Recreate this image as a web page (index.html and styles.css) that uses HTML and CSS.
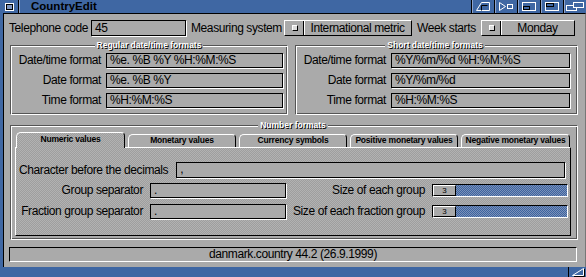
FILE: index.html
```html
<!DOCTYPE html>
<html>
	<head>
		<meta http-equiv="Content-Type" content="text/html; charset=UTF-8">
		<title>CountryEdit</title>
		<link rel="stylesheet" href="styles.css">
	</head>
	<body>
		<div class="win">
			<div class="titlebar">
				<div class="gad close">
					<svg width="18" height="13" viewBox="0 0 18 13"><rect x="5.5" y="3.5" width="8" height="7" fill="none" stroke="#fff"/><rect x="6.5" y="4.5" width="6" height="5" fill="#7d94bf" stroke="#000"/></svg>
				</div>
				<div class="title">CountryEdit</div>
				<div class="gad">
					<svg width="22" height="13" viewBox="0 0 22 13"><path d="M4.5 10.5 L9.5 2.5 H17.5 V10.5 Z" fill="none" stroke="#fff"/><path d="M9.5 10.5 V5.5 H15.5" fill="none" stroke="#000"/></svg>
				</div>
				<div class="gad">
					<svg width="22" height="13" viewBox="0 0 22 13"><path d="M4.5 2.5 L10.5 6.5 L4.5 10.5 Z" fill="none" stroke="#fff"/><rect x="12.5" y="4.5" width="5" height="4" fill="none" stroke="#fff"/></svg>
				</div>
				<div class="gad">
					<svg width="22" height="13" viewBox="0 0 22 13"><rect x="4.5" y="2.5" width="13" height="8" fill="none" stroke="#fff"/><rect x="5.5" y="6.5" width="6" height="3" fill="none" stroke="#000"/></svg>
				</div>
				<div class="gad">
					<svg width="22" height="13" viewBox="0 0 22 13"><rect x="4.5" y="2.5" width="13" height="8" fill="none" stroke="#fff"/><rect x="5.5" y="3.5" width="7" height="3" fill="none" stroke="#000"/></svg>
				</div>
				<div class="gad">
					<svg width="22" height="13" viewBox="0 0 22 13"><rect x="2.5" y="5.5" width="10" height="5" fill="none" stroke="#fff"/><rect x="9.5" y="2.5" width="10" height="5" fill="#3f67a3" stroke="#fff"/></svg>
				</div>
			</div>

			<div class="main">
				<div class="content">
					<div class="toprow">
						<span class="lbl">Telephone code</span>
						<div class="field">45</div>
						<span class="lbl pad">Measuring system</span>
						<div class="cycle"><span class="cyc-ico"></span><span class="cyc-txt">International metric</span></div>
						<span class="lbl pad">Week starts</span>
						<div class="cycle"><span class="cyc-ico"></span><span class="cyc-txt">Monday</span></div>
					</div>

					<div class="groups">
						<fieldset class="grp grp-left">
							<legend>Regular date/time formats</legend>
							<div class="form">
								<span class="lbl r">Date/time format</span><div class="field">%e. %B %Y %H:%M:%S</div>
								<span class="lbl r">Date format</span><div class="field">%e. %B %Y</div>
								<span class="lbl r">Time format</span><div class="field">%H:%M:%S</div>
							</div>
						</fieldset>
						<fieldset class="grp grp-right">
							<legend>Short date/time formats</legend>
							<div class="form">
								<span class="lbl r">Date/time format</span><div class="field">%Y/%m/%d %H:%M:%S</div>
								<span class="lbl r">Date format</span><div class="field">%Y/%m/%d</div>
								<span class="lbl r">Time format</span><div class="field">%H:%M:%S</div>
							</div>
						</fieldset>
					</div>

					<fieldset class="grp grp-number">
						<legend>Number formats</legend>
						<div class="tabs">
							<div class="tab active">Numeric values</div>
							<div class="tab">Monetary values</div>
							<div class="tab">Currency symbols</div>
							<div class="tab">Positive monetary values</div>
							<div class="tab last">Negative monetary values</div>
						</div>
						<div class="page">
							<div class="decrow">
								<span class="lbl">Character before the decimals</span>
								<div class="field wide">,</div>
							</div>
							<div class="numgrid">
								<span class="lbl r">Group separator</span>
								<div class="field">.</div>
								<span class="lbl r">Size of each group</span>
								<div class="slider"><span class="knob">3</span></div>

								<span class="lbl r">Fraction group separator</span>
								<div class="field">.</div>
								<span class="lbl r">Size of each fraction group</span>
								<div class="slider"><span class="knob">3</span></div>
							</div>
						</div>
					</fieldset>

					<div class="status">danmark.country 44.2 (26.9.1999)</div>
				</div>
			</div>

			<div class="bottombar">
				<div class="sizer">
					<svg width="17" height="10" viewBox="0 0 17 10"><path d="M3.5 8.5 L14.5 1.5 V8.5 Z" fill="none" stroke="#fff"/><path d="M5 9.5 H15.5 V2" fill="none" stroke="#000"/></svg>
				</div>
			</div>
		</div>
	</body>
</html>
```

FILE: styles.css
```css
body {
	margin : 0;
	background-color : #ffffff;
	font-family : "Liberation Sans", Arial, sans-serif;
	font-size : 12px;
	letter-spacing : -0.4px;
	color : #000000;
}
.win {
	width : 586px;
	height : 277px;
	background-color : #3f67a3;
	display : flex;
	flex-direction : column;
}

/* title bar */
.titlebar {
	height : 13px;
	display : flex;
}
.gad {
	width : 22px;
	border-left : 1px solid #000000;
	box-shadow : inset 1px 0 0 #8ea4cc;
}
.gad svg {
	display : block;
}
.gad.close {
	width : 18px;
	border-left : none;
	border-right : 1px solid #000000;
	box-shadow : none;
}
.title {
	flex : 1;
	padding-left : 11px;
	font-size : 11.5px;
	font-weight : bold;
	line-height : 13px;
	letter-spacing : 0;
	border-left : 1px solid #8ea4cc;
}

/* window body */
.main {
	flex : 1;
	display : flex;
	padding : 0 0 0 3px;
}
.content {
	flex : 1;
	background-color : #aaaaaa;
	border-left : 1px solid #000000;
	border-top : 1px solid #000000;
	border-right : 1px solid #777777;
	padding : 6px 0 0 5px;
}
.lbl {
	white-space : nowrap;
	line-height : 15px;
}
.lbl.r {
	text-align : right;
}
.lbl.pad {
	padding-left : 5px;
}
.field {
	height : 15px;
	background-color : #aaaaaa;
	border : 1px solid #000000;
	box-shadow : 1px 1px 0 #ffffff;
	box-sizing : border-box;
	padding-left : 3px;
	line-height : 13px;
	white-space : nowrap;
	overflow : hidden;
}

/* first row */
.toprow {
	display : grid;
	grid-template-columns : 82px 95px 98px 128px 69px 94px;
	align-items : center;
	height : 16px;
}
.toprow .field {
	height : 16px;
	line-height : 14px;
}
.cycle {
	height : 16px;
	box-sizing : border-box;
	border : 1px solid;
	border-color : #ffffff #000000 #000000 #ffffff;
	display : flex;
	align-items : center;
}
.cyc-ico {
	width : 4px;
	height : 4px;
	margin-left : 7px;
	background-color : #dddddd;
	border : 1px solid;
	border-color : #ffffff #000000 #000000 #ffffff;
}
.cyc-txt {
	flex : 1;
	text-align : center;
	border-left : 1px solid #000000;
	box-shadow : inset 1px 0 0 #ffffff;
	margin-left : 5px;
	line-height : 14px;
	white-space : nowrap;
}

/* groups */
.grp {
	margin : 0;
	min-width : 0;
	border : 1px solid;
	border-color : #555555 #ffffff #ffffff #555555;
	box-shadow : inset 1px 1px 0 #ffffff, inset -1px -1px 0 #555555;
}
.grp legend {
	margin : 0 auto;
	padding : 0 2px;
	font-size : 8.5px;
	font-weight : bold;
	letter-spacing : 0;
	line-height : 9px;
	color : #ffffff;
	text-shadow : 1px 1px 0 #000000;
	background-color : #aaaaaa;
}
.groups {
	display : flex;
	gap : 7px;
	margin : 5px 0 0 1px;
}
.grp-left {
	width : 278px;
	box-sizing : border-box;
	padding : 3px 4px 6px 4px;
}
.grp-right {
	width : 283px;
	box-sizing : border-box;
	padding : 3px 7px 6px 4px;
}
.form {
	display : grid;
	grid-template-columns : 1fr 177px;
	column-gap : 5px;
	row-gap : 5px;
}
.grp-right .form {
	grid-template-columns : 1fr 179px;
}

/* number formats */
.grp-number {
	width : 568px;
	box-sizing : border-box;
	margin : 6px 0 0 1px;
	padding : 2px 6px 3px 4px;
}
.tabs {
	display : flex;
	align-items : flex-end;
	gap : 3px;
	height : 15px;
	padding-left : 1px;
}
.tab {
	width : 108px;
	height : 13px;
	box-sizing : border-box;
	border : 1px solid;
	border-bottom : none;
	border-color : #ffffff #000000 #ffffff #ffffff;
	border-radius : 5px 4px 0 0;
	font-size : 8.5px;
	font-weight : bold;
	letter-spacing : -0.2px;
	line-height : 11px;
	text-align : center;
	white-space : nowrap;
}
.tab.active, .tab.last {
	width : 109px;
}
.tab.active {
	height : 16px;
	margin-bottom : -1px;
	position : relative;
	line-height : 13px;
	background : repeating-conic-gradient(#9e9e9e 0 25%, #b2b2b2 0 50%) 0 0 / 2px 2px;
}
.page {
	height : 89px;
	box-sizing : border-box;
	border : 1px solid;
	border-color : #ffffff #000000 #000000 #ffffff;
	background : repeating-conic-gradient(#9e9e9e 0 25%, #b2b2b2 0 50%) 0 0 / 2px 2px;
	padding : 14px 5px 0 3px;
}
.decrow {
	display : flex;
	align-items : center;
}
.decrow .field {
	flex : 1;
	height : 16px;
	margin-left : 8px;
}
.numgrid {
	display : grid;
	grid-template-columns : 124px 136px 1fr 136px;
	grid-template-rows : 15px 15px;
	column-gap : 7px;
	row-gap : 6px;
	align-items : center;
	margin-top : 5px;
}
.slider {
	height : 13px;
	box-sizing : border-box;
	border : 1px solid;
	border-color : #000000 #ffffff #ffffff #000000;
	background : repeating-conic-gradient(#3c63a0 0 25%, #7d92b8 0 50%) 0 0 / 2px 2px;
	display : flex;
}
.knob {
	width : 23px;
	box-sizing : border-box;
	border : 1px solid;
	border-color : #ffffff #000000 #000000 #ffffff;
	background-color : #aaaaaa;
	font-size : 8px;
	letter-spacing : 0;
	line-height : 10px;
	text-align : center;
}

/* status line */
.status {
	width : 568px;
	height : 15px;
	box-sizing : border-box;
	margin-top : 7px;
	border : 1px solid;
	border-color : #000000 #ffffff #ffffff #000000;
	text-align : center;
	line-height : 13px;
}

/* bottom border */
.bottombar {
	height : 10px;
	display : flex;
	justify-content : flex-end;
}
.sizer {
	width : 17px;
	border-left : 1px solid #000000;
}
.sizer svg {
	display : block;
}
```
